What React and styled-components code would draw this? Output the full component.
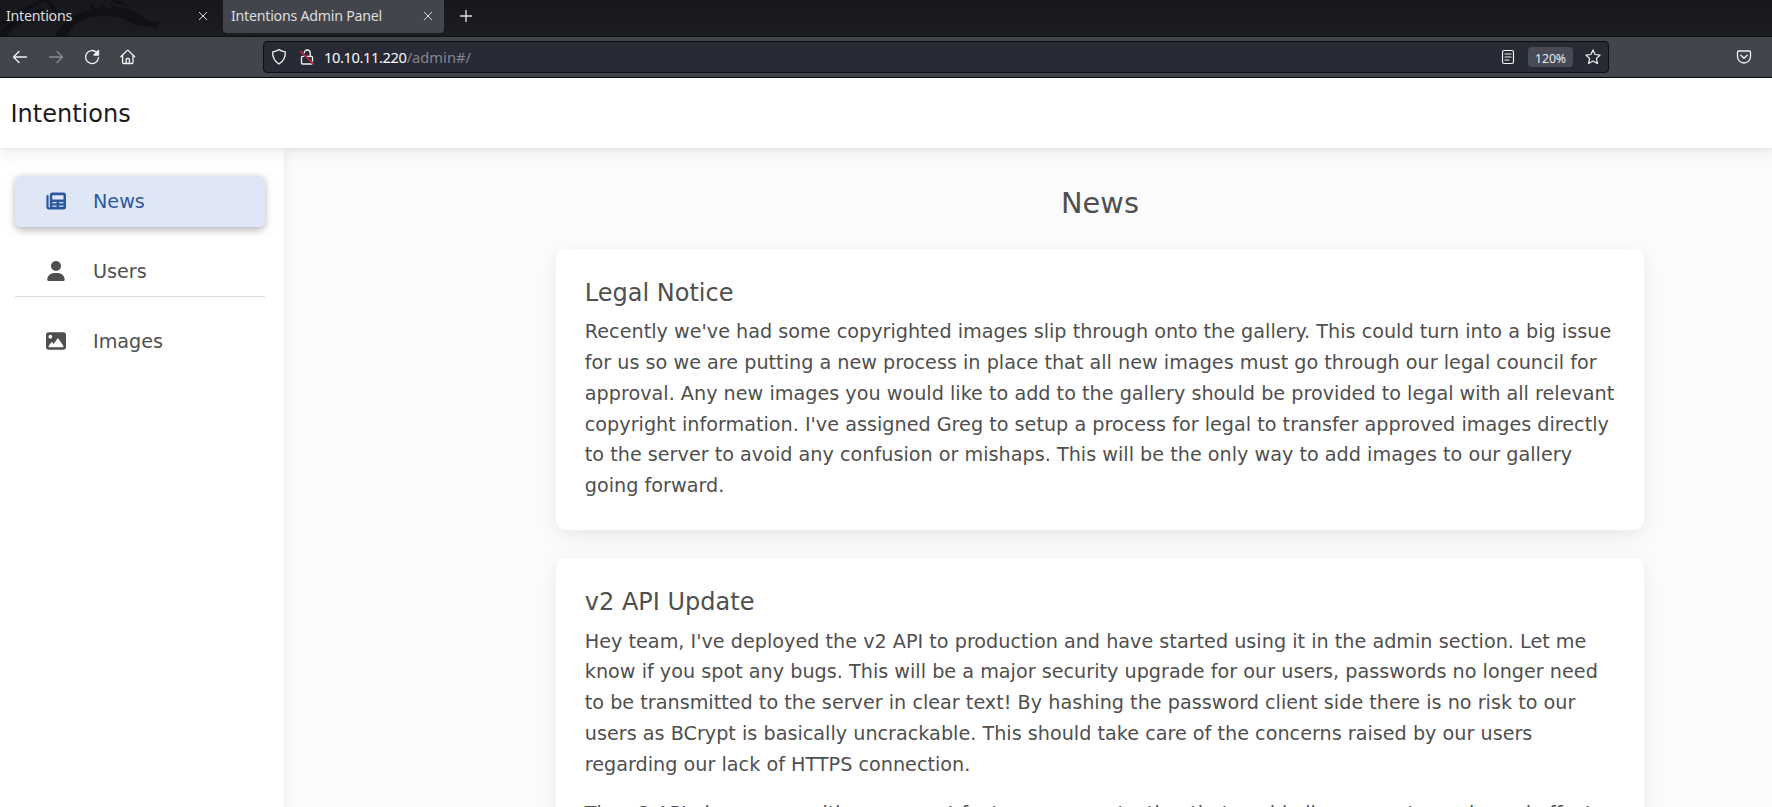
import React from 'react';
import styled, { createGlobalStyle } from 'styled-components';
import { FaUser, FaImage } from 'react-icons/fa6';

const Global = createGlobalStyle`
  * { box-sizing: border-box; }
  html, body { margin: 0; height: 807px; overflow: hidden; background: #fbfbfb; }
  body { font-family: "DejaVu Sans", sans-serif; font-size: 19.2px; line-height: 30.72px; color: #4f4f4f; }
  h1, h2, p { margin: 0; font-weight: 400; }
`;
const Window = styled.div`height: 807px; display: flex; flex-direction: column; overflow: hidden;`;
const TabBar = styled.div`
  flex: none; height: 37px; display: flex; align-items: flex-start; position: relative;
  background: linear-gradient(#17181c, #1b1c20); border-bottom: 1px solid #0f1014;
  font: 14.2px/28px "Noto Sans", sans-serif; letter-spacing: -0.24px; color: #dededf;
`;
const Dragon = styled.svg`position: absolute; left: 0; top: 0;`;
const Tab = styled.div`
  position: relative; display: flex; align-items: center; justify-content: space-between;
  width: ${p => p.$w}px; height: 33px; padding: 0 ${p => p.$pr}px 2px ${p => p.$pl}px;
  background: ${p => (p.$active ? '#43454c' : 'transparent')};
  border-radius: 0 0 4px 4px;
`;
const NewTab = styled.div`display: flex; padding: 9px 0 0 15px;`;
const Toolbar = styled.div`
  flex: none; height: 41px; display: flex; align-items: center; padding: 0 20px 0 11px;
  background: #43454c; border-bottom: 1px solid #0c0c0f; color: #f2f2f3;
`;
const NavButtons = styled.div`display: flex; gap: 18px; width: 252px;`;
const Icon = styled.svg`display: block; flex: none; fill: none; stroke: currentColor; stroke-linecap: round; stroke-linejoin: round;
  opacity: ${p => (p.$dim ? 0.4 : 1)};`;
const LockIcon = styled(Icon)`margin-left: 12px;`;
const AddressBar = styled.div`
  width: 1346px; height: 32px; display: flex; align-items: center; padding: 0 7px;
  background: #282a36; border: 1px solid #0d0e12; border-radius: 4px;
`;
const Url = styled.div`
  flex: 1; margin-left: 9px; font: 14.7px/28px "Noto Sans", sans-serif; letter-spacing: -0.4px; color: #fbfbfe;
  span { color: #85868d; letter-spacing: 0; }
`;
const Zoom = styled.div`
  width: 45px; height: 20px; margin: 0 12px 0 12px; border-radius: 4px; background: #484a54;
  font: 12.3px/23px "Noto Sans", sans-serif; letter-spacing: -0.1px; text-align: center; color: #e9e9ec;
`;
const Spacer = styled.div`flex: 1;`;
const Header = styled.header`
  flex: none; height: 70px; padding: 2px 10.5px 0; display: flex; align-items: center; position: relative; z-index: 2;
  background: #fff; color: #1b1b1b; font-size: 24px;
  box-shadow: 0 4.8px 14.4px 0 rgba(0,0,0,.07), 0 2.4px 4.8px 0 rgba(0,0,0,.05);
`;
const Body = styled.div`flex: 1; min-height: 0; display: flex;`;
const Sidebar = styled.nav`
  width: 284px; padding: 28px 19px 0 15px; background: #fff; display: flex; flex-direction: column; gap: 19px;
  box-shadow: 0 2.4px 6px 0 rgba(0,0,0,.05), 0 2.4px 12px 0 rgba(0,0,0,.05);
`;
const Item = styled.div`
  height: 51px; display: flex; align-items: center; padding: 0 0 1px 31px; gap: 27px;
  color: ${p => (p.$active ? '#2c58a0' : '#4f4f4f')};
  background: ${p => (p.$active ? '#dfe7f6' : '#fff')};
  background-clip: border-box;
  border-radius: ${p => (p.$active ? '6px' : '0')};
  border-bottom: 1px solid ${p => (p.$line ? '#dcdcdc' : 'transparent')};
  box-shadow: ${p => (p.$active ? '0 2.4px 6px 0 rgba(0,0,0,.2), 0 2.4px 12px 0 rgba(0,0,0,.1)' : 'none')};
  svg { display: block; }
`;
const Label = styled.span`padding-top: 3px;`;
const Main = styled.main`flex: 1; min-width: 0; display: flex; flex-direction: column; align-items: center; padding: 38px 0 0 144px;`;
const Content = styled.div`width: 1088px; display: flex; flex-direction: column; gap: 28.6px;`;
const PageTitle = styled.h1`font-size: 28.8px; line-height: 34.6px; text-align: center;`;
const Card = styled.section`
  padding: 29.8px 28.8px 28.2px; background: #fff; border-radius: 9.6px;
  box-shadow: 0 2.4px 18px -3.6px rgba(0,0,0,.07), 0 12px 24px -2.4px rgba(0,0,0,.04);
`;
const CardTitle = styled.h2`font-size: 24px; line-height: 28.8px; margin-bottom: 9.6px;`;
const Text = styled.p`white-space: nowrap; letter-spacing: 0.008px; & + & { margin-top: 19.2px; }`;

const Close = () => <Icon width="10" height="10" viewBox="0 0 10 10" strokeWidth="1"><path d="M1.300 1.300l7.400 7.400M8.700 1.300L1.300 8.700" /></Icon>;
const Newspaper = () => (
  <svg width="20" height="20" viewBox="0 0 20 20" fill="currentColor">
    <path fillRule="evenodd" d="M6.500 1.500h11A2.500 2.500 0 0 1 20 4v12a2.500 2.500 0 0 1-2.500 2.500H3A2.600 2.600 0 0 1 .4 16V5.200a1.100 1.100 0 0 1 2.200 0V16a.6.6 0 0 0 1.200 0V4a2.500 2.500 0 0 1 2.700-2.500zM6.300 4.300v4.200h11.200V4.300zM6.300 11v1.300h4.200V11zM13.200 11v1.300h4.300V11zM6.300 14.500v1.300h4.200v-1.300zM13.200 14.500v1.300h4.300v-1.300z" />
  </svg>
);
const Lines = ({ rows }) => <Text>{rows.map((r, i) => <React.Fragment key={i}>{i > 0 && <br />}{r}</React.Fragment>)}</Text>;

const legal = [
  "Recently we've had some copyrighted images slip through onto the gallery. This could turn into a big issue",
  'for us so we are putting a new process in place that all new images must go through our legal council for',
  'approval. Any new images you would like to add to the gallery should be provided to legal with all relevant',
  "copyright information. I've assigned Greg to setup a process for legal to transfer approved images directly",
  'to the server to avoid any confusion or mishaps. This will be the only way to add images to our gallery',
  'going forward.',
];
const update = [
  "Hey team, I've deployed the v2 API to production and have started using it in the admin section. Let me",
  'know if you spot any bugs. This will be a major security upgrade for our users, passwords no longer need',
  'to be transmitted to the server in clear text! By hashing the password client side there is no risk to our',
  'users as BCrypt is basically uncrackable. This should take care of the concerns raised by our users',
  'regarding our lack of HTTPS connection.',
];
const features = ['The v2 API also comes with some neat features we are testing that could allow users to apply cool effects'];

export default function App() {
  return (
    <Window>
      <Global />
      <TabBar>
        <Dragon width="170" height="36" viewBox="0 0 170 36" fill="#101115">
          <path d="M0 22Q20 8 40 0h6L0 27zM0 30Q22 14 43 7l3 3Q24 17 6 36H0zM44 0h6l12 14-3 6z" />
          <path d="M54 37Q59 26 68 20Q77 12 91 10L89 3Q92 8 102 9L99 3Q103 8 113 9L110 3Q115 8 124 8L132 10Q141 14 145 19Q152 22 160 22L156 29Q150 26 143 26Q133 25 125 19Q112 14 96 16Q74 19 66 37z" />
          <path d="M111 0h6q9 3 13 7-9-1-19-7z" />
        </Dragon>
        <Tab $w={223} $pl={6} $pr={15}>Intentions<Close /></Tab>
        <Tab $w={221} $pl={8} $pr={11} $active>Intentions Admin Panel<Close /></Tab>
        <NewTab><Icon width="14" height="14" viewBox="0 0 14 14" strokeWidth="1.4"><path d="M7 1.500v11M1.500 7h11" /></Icon></NewTab>
      </TabBar>
      <Toolbar>
        <NavButtons>
          <Icon width="18" height="18" viewBox="0 0 18 18" strokeWidth="1.3"><path d="M15.500 9H2.500M8 3.500L2.500 9 8 14.500" /></Icon>
          <Icon $dim width="18" height="18" viewBox="0 0 18 18" strokeWidth="1.3"><path d="M2.500 9h13M10 3.500L15.500 9 10 14.500" /></Icon>
          <Icon width="18" height="18" viewBox="0 0 18 18" strokeWidth="1.3"><path d="M13.700 4.500A6.500 6.500 0 1 0 15.500 9.500" /><path d="M15.500 2.500V7h-4.500z" fill="currentColor" /></Icon>
          <Icon width="18" height="18" viewBox="0 0 18 18" strokeWidth="1.3"><path d="M1.800 8.800L8 2.600q.7-.6 1.400 0L15.700 8.800M3.600 7.500v7q0 1 1 1h8.400q1 0 1-1v-7M7.200 15.500v-4q0-1 1-1h1.200q1 0 1 1v4" /></Icon>
        </NavButtons>
        <AddressBar>
          <Icon width="16" height="18" viewBox="0 0 16 18" strokeWidth="1.300"><path d="M8 1.600Q11 3.600 14.300 3.800c.3 5-1.800 9.500-6.300 12.200C3.500 13.300 1.400 8.800 1.700 3.800Q5 3.600 8 1.600z" /></Icon>
          <LockIcon width="16" height="18" viewBox="0 0 16 18" strokeWidth="1.300"><path d="M3.500 8.300h9q1 0 1 1V15q0 1-1 1h-9q-1 0-1-1V9.300q0-1 1-1M5.200 5a3 3 0 0 1 6 0v3" /><path d="M1.500 3.500l13 12.500" stroke="#282a36" strokeWidth="2.400" /><path d="M1.500 3.500l13 12.500" stroke="#e22850" /></LockIcon>
          <Url>10.10.11.220<span>/admin#/</span></Url>
          <Icon width="16" height="16" viewBox="0 0 16 16" strokeWidth="1.200"><path d="M4 1.500h8q1.500 0 1.500 1.500v10q0 1.500-1.500 1.500H4q-1.500 0-1.500-1.500V3q0-1.500 1.500-1.500M5 5h6M5 8h6M5 11h4" /></Icon>
          <Zoom>120%</Zoom>
          <Icon width="16" height="16" viewBox="0 0 16 16" strokeWidth="1.200"><path d="M8 .9l2.100 4.600 5 .6-3.700 3.400 1 5L8 12l-4.400 2.500 1-5L.9 6.100l5-.6z" /></Icon>
        </AddressBar>
        <Spacer />
        <Icon width="16" height="16" viewBox="0 0 16 16" strokeWidth="1.300"><path d="M2.500 2h11q1 0 1 1v4.500a6.500 6.500 0 0 1-13 0V3q0-1 1-1M4.800 6.300L8 9.300l3.200-3" /></Icon>
      </Toolbar>
      <Header>Intentions</Header>
      <Body>
        <Sidebar>
          <Item $active><Newspaper /><Label>News</Label></Item>
          <Item $line><FaUser size={20} /><Label>Users</Label></Item>
          <Item><FaImage size={20} /><Label>Images</Label></Item>
        </Sidebar>
        <Main>
          <Content>
            <PageTitle>News</PageTitle>
            <Card><CardTitle>Legal Notice</CardTitle><Lines rows={legal} /></Card>
            <Card><CardTitle>v2 API Update</CardTitle><Lines rows={update} /><Lines rows={features} /></Card>
          </Content>
        </Main>
      </Body>
    </Window>
  );
}
